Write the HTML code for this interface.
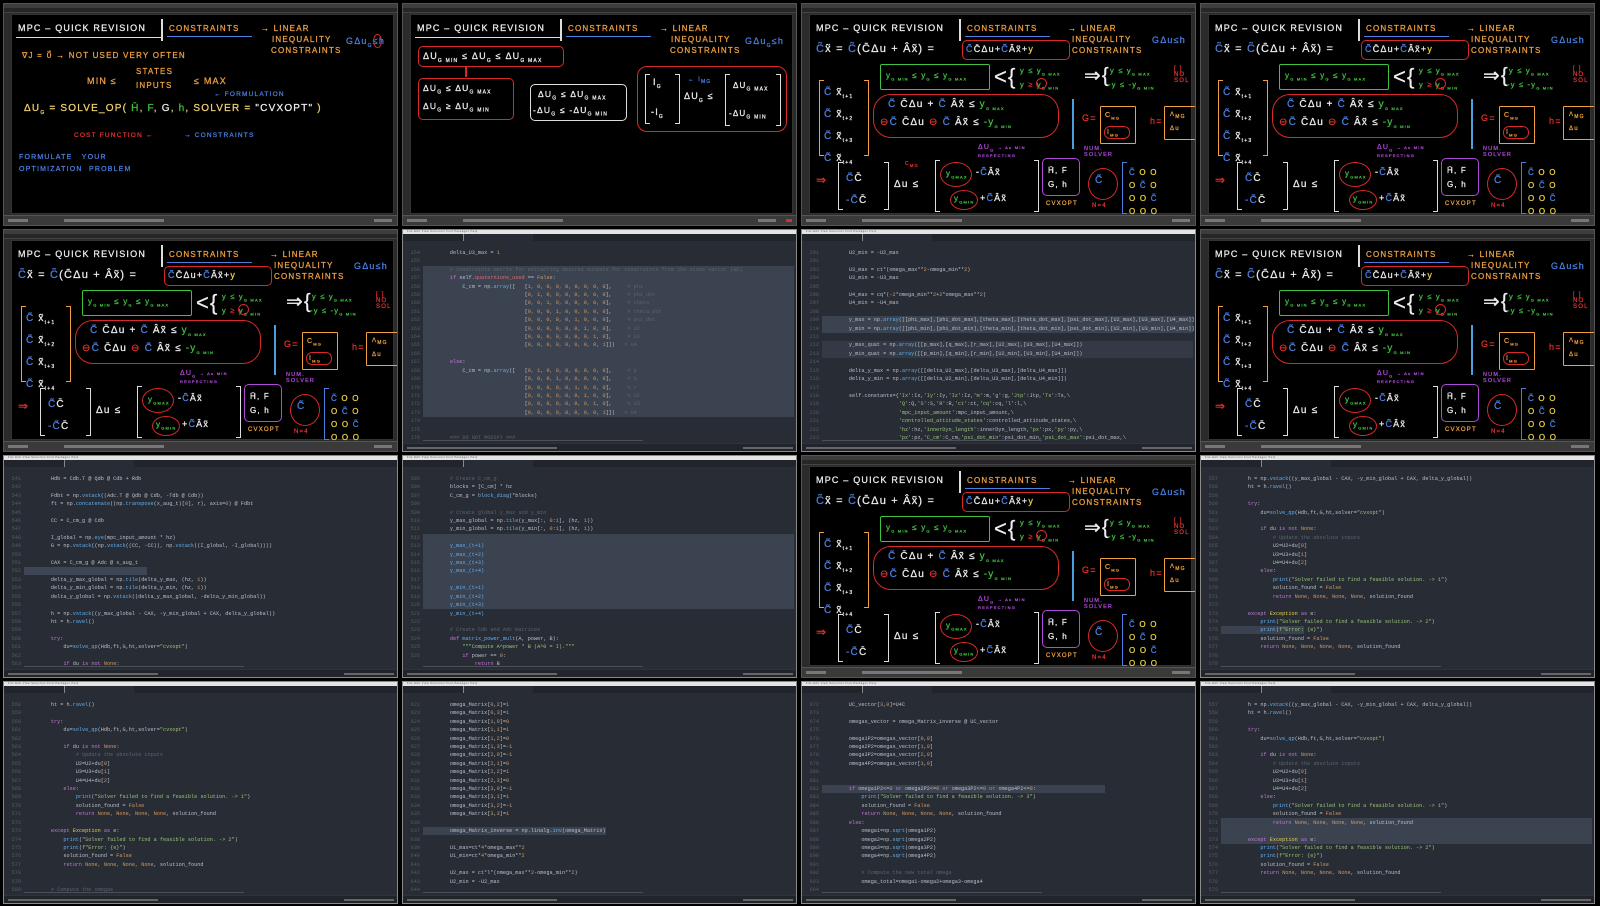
<!DOCTYPE html>
<html><head><meta charset="utf-8"><style>
*{margin:0;padding:0;box-sizing:border-box}
body{width:1600px;height:906px;background:#000;position:relative;overflow:hidden;font-family:"Liberation Sans",sans-serif}
.t{position:absolute;width:395px;height:223px;overflow:hidden}
.wb{background:#2b2b2b;border:1px solid #555}
.wb .mb{position:absolute;left:0;top:0;right:0;height:4px;background:#3d3d3d}
.wb .ru{position:absolute;left:0;top:4px;right:0;height:5px;background:#262626;border-bottom:1px solid #444}
.wb .cv{position:absolute;left:7px;top:10px;right:3px;bottom:11px;background:#000;border:1px solid #333}
.wb .sb{position:absolute;left:0;right:0;bottom:0;height:10px;background:#3a3a3a;border-top:1px solid #555}
.wb .sb i{position:absolute;top:3px;height:3px;background:#777}
.h{position:absolute;white-space:nowrap;letter-spacing:1.2px;font-size:8px;line-height:1;-webkit-text-stroke:0.25px currentColor}
.w{color:#eee}.o{color:#f0a040}.b{color:#4a7fe0}.r{color:#e53030}.g{color:#3fc23f}.p{color:#b04ad8}.y{color:#e8d040}
.bx{position:absolute;border:1.5px solid #d82828;border-radius:5px}
.code{background:#282c34;border:1px solid #8a8a8a}
.code .mb{position:absolute;left:0;top:0;right:0;height:4px;background:#e4e4e4;font-size:2.5px;color:#555;padding-left:4px;line-height:4px;letter-spacing:.5px}
.code .tb{position:absolute;left:0;top:4px;right:0;height:7px;background:#21252b}
.code .tb b{position:absolute;left:60px;top:0;width:70px;height:7px;background:#282c34;border-left:1px solid #888}
.code .sb{position:absolute;left:0;right:0;bottom:0;height:8px;background:#21252b;border-top:1px solid #333}
.code .sb i{position:absolute;top:3px;height:2px;background:#666}
.code .sc{position:absolute;left:20px;bottom:10px;width:220px;height:1px;background:#4a4f58}
pre{position:absolute;top:19px;font-family:"Liberation Mono",monospace;font-size:5.2px;line-height:8.4px;white-space:pre}
pre.n{left:4px;color:#555b66;text-align:right;width:13px}
pre.c{left:22px;color:#b9bfca}
.hl{position:absolute;left:20px;right:2px;background:#3b4250}
.k{color:#c678dd}.f{color:#61afef}.s{color:#98c379}.m{color:#d19a66}.cm{color:#5c6370}.e{color:#e06c75}
.vl{position:absolute;width:1.5px;background:#ddd}
.ul{position:absolute;height:1.2px;background:#4a7fe0}
.brk{position:absolute;border:1.5px solid #ddd;border-left-width:1.5px;border-right:none}
.brr{position:absolute;border:1.5px solid #ddd;border-left:none}
.el{position:absolute;border:1.5px solid #d82828;border-radius:50%}
</style></head><body>

<!-- r0c0 -->
<div class="t wb" style="left:3px;top:3px">
<div class="mb"></div><div class="ru"></div><div class="cv"></div>
<div class="h w" style="left:14px;top:20px;font-size:9px">MPC – QUICK REVISION</div>
<div class="ul" style="left:12px;top:33px;width:145px;background:#ddd"></div>
<div class="vl" style="left:157px;top:15px;height:22px"></div>
<div class="h o" style="left:165px;top:21px;font-size:8px">CONSTRAINTS</div>
<div class="ul" style="left:163px;top:32px;width:85px"></div>
<div class="h o" style="left:257px;top:21px">→ LINEAR</div>
<div class="h o" style="left:268px;top:32px">INEQUALITY</div>
<div class="h o" style="left:267px;top:43px">CONSTRAINTS</div>
<div class="h b" style="left:342px;top:33px;font-size:9px">GΔu<sub style="font-size:5px">G</sub>≤h</div>
<div class="el" style="left:369px;top:30px;width:9px;height:14px"></div>
<div class="h o" style="left:18px;top:48px">∇J = 0⃗ → NOT USED VERY OFTEN</div>
<div class="h o" style="left:83px;top:73px;font-size:9px">MIN ≤</div>
<div class="h o" style="left:132px;top:64px">STATES</div>
<div class="h o" style="left:132px;top:78px">INPUTS</div>
<div class="h o" style="left:190px;top:73px;font-size:9px">≤ MAX</div>
<div class="h b" style="left:210px;top:88px;font-size:6.5px">← FORMULATION</div>
<div class="h" style="left:20px;top:100px;font-size:10px;color:#f0d070">ΔU<sub style="font-size:5px">G</sub> = SOLVE_OP( <span class="g">H̄</span>, <span class="g">F</span>, <span class="w">G</span>, <span class="g">h</span>, SOLVER = <span class="w">"CVXOPT"</span> )</div>
<div class="h r" style="left:70px;top:129px;font-size:6.5px">COST FUNCTION ←</div>
<div class="h b" style="left:180px;top:129px;font-size:6.5px">→ CONSTRAINTS</div>
<div class="h b" style="left:15px;top:150px;font-size:7px">FORMULATE &nbsp; YOUR</div>
<div class="h b" style="left:15px;top:162px;font-size:7px">OPTIMIZATION &nbsp;PROBLEM</div>
<div class="sb"><i style="left:4px;width:20px"></i><i style="left:60px;width:100px"></i><i style="left:370px;width:18px"></i></div>
</div>

<!-- r0c1 -->
<div class="t wb" style="left:402px;top:3px">
<div class="mb"></div><div class="ru"></div><div class="cv"></div>
<div class="h w" style="left:14px;top:20px;font-size:9px">MPC – QUICK REVISION</div>
<div class="ul" style="left:12px;top:33px;width:145px;background:#ddd"></div>
<div class="vl" style="left:157px;top:15px;height:22px"></div>
<div class="h o" style="left:165px;top:21px">CONSTRAINTS</div>
<div class="ul" style="left:163px;top:32px;width:85px"></div>
<div class="h o" style="left:257px;top:21px">→ LINEAR</div>
<div class="h o" style="left:268px;top:32px">INEQUALITY</div>
<div class="h o" style="left:267px;top:43px">CONSTRAINTS</div>
<div class="h b" style="left:342px;top:33px;font-size:9px">GΔu<sub style="font-size:5px">G</sub>≤h</div>
<div class="bx" style="left:15px;top:42px;width:146px;height:21px"></div>
<div class="h w" style="left:20px;top:48px;font-size:9px">ΔU<sub style="font-size:5px">G MIN</sub> ≤ ΔU<sub style="font-size:5px">G</sub> ≤ ΔU<sub style="font-size:5px">G MAX</sub></div>
<div style="position:absolute;left:62px;top:63px;width:1.5px;height:10px;background:#d82828"></div>
<div class="bx" style="left:15px;top:74px;width:96px;height:42px"></div>
<div class="h w" style="left:20px;top:80px;font-size:8.5px">ΔU<sub style="font-size:5px">G</sub> ≤ ΔU<sub style="font-size:5px">G MAX</sub></div>
<div class="h w" style="left:20px;top:98px;font-size:8.5px">ΔU<sub style="font-size:5px">G</sub> ≥ ΔU<sub style="font-size:5px">G MIN</sub></div>
<div class="bx" style="left:127px;top:80px;width:97px;height:37px;border-color:#ddd"></div>
<div class="h w" style="left:135px;top:86px;font-size:8.5px">ΔU<sub style="font-size:5px">G</sub> ≤ ΔU<sub style="font-size:5px">G MAX</sub></div>
<div class="h w" style="left:130px;top:102px;font-size:8.5px">-ΔU<sub style="font-size:5px">G</sub> ≤ -ΔU<sub style="font-size:5px">G MIN</sub></div>
<div class="bx" style="left:234px;top:62px;width:150px;height:66px;border-radius:10px"></div>
<div class="brk" style="left:242px;top:70px;width:5px;height:50px"></div>
<div class="brr" style="left:272px;top:70px;width:5px;height:50px"></div>
<div class="h w" style="left:250px;top:74px;font-size:9px">I<sub style="font-size:5px">G</sub></div>
<div class="h w" style="left:248px;top:104px;font-size:9px">-I<sub style="font-size:5px">G</sub></div>
<div class="h w" style="left:281px;top:88px;font-size:9px">ΔU<sub style="font-size:5px">G</sub> ≤</div>
<div class="brk" style="left:322px;top:70px;width:5px;height:52px"></div>
<div class="brr" style="left:373px;top:70px;width:5px;height:52px"></div>
<div class="h w" style="left:330px;top:78px;font-size:8px">ΔU<sub style="font-size:5px">G MAX</sub></div>
<div class="h w" style="left:326px;top:106px;font-size:8px">-ΔU<sub style="font-size:5px">G MIN</sub></div>
<div class="h b" style="left:285px;top:73px;font-size:6px">← I<sub>MG</sub></div>
<div class="sb"><i style="left:4px;width:20px"></i><i style="left:60px;width:100px"></i><i style="left:355px;width:18px"></i><i style="left:383px;width:6px;background:#c33"></i></div>
</div>

<!-- complex boards -->
<div class="t wb" style="left:801px;top:3px">
<div class="mb"></div><div class="ru"></div><div class="cv"></div>
<div class="h w" style="left:14px;top:20px;font-size:9px">MPC – QUICK REVISION</div>
<div class="vl" style="left:157px;top:15px;height:22px"></div>
<div class="h o" style="left:165px;top:21px">CONSTRAINTS</div><div class="ul" style="left:163px;top:32px;width:85px"></div>
<div class="h o" style="left:266px;top:21px">→ LINEAR</div><div class="h o" style="left:270px;top:32px">INEQUALITY</div><div class="h o" style="left:270px;top:43px">CONSTRAINTS</div>
<div class="h b" style="left:350px;top:32px;font-size:9px">GΔu≤h</div>
<div class="h b" style="left:14px;top:40px;font-size:11px">C̃<span class="w">x̃</span> <span class="w">=</span> C̃<span class="w">(C̄Δu + Âx̃) =</span></div>
<div class="bx" style="left:160px;top:36px;width:108px;height:20px"></div>
<div class="h b" style="left:164px;top:41px;font-size:9px">C̃<span class="w">C̄Δu+</span>C̃<span class="w">Âx̃+</span><span class="y">y</span></div>
<div class="bx" style="left:78px;top:60px;width:110px;height:26px;border-color:#3fc23f;border-radius:2px"></div>
<div class="h g" style="left:84px;top:68px;font-size:8px">y<sub style="font-size:4px">G MIN</sub> ≤ y<sub style="font-size:4px">G</sub> ≤ y<sub style="font-size:4px">G MAX</sub></div>
<div class="h w" style="left:192px;top:62px;font-size:22px">&lt;{</div>
<div class="h g" style="left:218px;top:63px;font-size:7.5px">y ≤ y<sub style="font-size:4px">G MAX</sub></div>
<div class="h g" style="left:218px;top:77px;font-size:7.5px">y <span class="r">≥</span> y<sub style="font-size:4px">G MIN</sub></div>
<div class="el" style="left:234px;top:74px;width:11px;height:11px"></div>
<div class="h w" style="left:282px;top:62px;font-size:20px">⇒{</div>
<div class="h g" style="left:308px;top:63px;font-size:7.5px">y ≤ y<sub style="font-size:4px">G MAX</sub></div>
<div class="h g" style="left:306px;top:77px;font-size:7.5px">-y ≤ -y<sub style="font-size:4px">G MIN</sub></div>
<div class="h r" style="left:372px;top:62px;font-size:6px">[ ]<br>NO<br>SOL</div>
<div class="brk" style="left:17px;top:76px;width:5px;height:76px;border-color:#f0a040"></div>
<div class="brr" style="left:62px;top:76px;width:5px;height:76px;border-color:#f0a040"></div>
<div class="h b" style="left:22px;top:80px;font-size:10px;line-height:17px">C̃ <span class="w">x̃<sub style="font-size:5px">t+1</sub></span><br>C̃ <span class="w">x̃<sub style="font-size:5px">t+2</sub></span><br>C̃ <span class="w">x̃<sub style="font-size:5px">t+3</sub></span><br>C̃ <span class="w">x̃<sub style="font-size:5px">t+4</sub></span></div>
<div class="bx" style="left:71px;top:90px;width:186px;height:44px;border-radius:18px"></div>
<div class="h b" style="left:86px;top:96px;font-size:10px">C̃ <span class="w">C̄Δu +</span> C̃ <span class="w">Âx̃ ≤</span> <span class="g">y<sub style="font-size:4px">G MAX</sub></span></div>
<div class="h w" style="left:78px;top:114px;font-size:10px"><span class="r">⊖</span><span class="b">C̃</span> C̄Δu <span class="r">⊖</span> <span class="b">C̃</span> Âx̃ ≤ <span class="g">-y<sub style="font-size:4px">G MIN</sub></span></div>
<div style="position:absolute;left:270px;top:95px;width:1.5px;height:50px;background:#4a9fe0"></div>
<div class="h r" style="left:280px;top:110px;font-size:9px">G=</div>
<div class="bx" style="left:298px;top:102px;width:36px;height:38px;border-color:#f0a040;border-radius:1px"></div>
<div class="h o" style="left:303px;top:108px;font-size:7px">C<sub style="font-size:4px">MG</sub></div>
<div class="bx" style="left:302px;top:122px;width:26px;height:13px;border-radius:6px"></div>
<div class="h o" style="left:305px;top:125px;font-size:7px">I<sub style="font-size:4px">MG</sub></div>
<div class="h r" style="left:348px;top:113px;font-size:9px">h=</div>
<div class="bx" style="left:362px;top:102px;width:40px;height:34px;border-color:#f0a040;border-radius:1px"></div>
<div class="h o" style="left:368px;top:108px;font-size:6px">Λ<sub>MG</sub><br><br>Δu</div>
<div class="h p" style="left:176px;top:140px;font-size:7px">ΔU<sub style="font-size:4px">G</sub> <span style="font-size:4px">→ Δu MIN<br>RESPECTING</span></div>
<div class="h p" style="left:282px;top:143px;font-size:5.5px">NUM.<br>SOLVER</div>
<div class="h r" style="left:14px;top:170px;font-size:12px">⇒</div>
<div class="brk" style="left:36px;top:158px;width:5px;height:48px"></div>
<div class="brr" style="left:82px;top:158px;width:5px;height:48px"></div>
<div class="h b" style="left:44px;top:164px;font-size:10px;line-height:22px">C̃<span class="w">C̄</span><br>-C̃<span class="w">C̄</span></div>
<div class="h w" style="left:92px;top:176px;font-size:10px">Δu ≤</div>
<div class="h r" style="left:103px;top:158px;font-size:5px">C<sub>MG</sub></div>
<div class="brk" style="left:133px;top:156px;width:5px;height:52px"></div>
<div class="brr" style="left:232px;top:156px;width:5px;height:52px"></div>
<div class="el" style="left:138px;top:158px;width:32px;height:25px"></div>
<div class="h g" style="left:144px;top:166px;font-size:8px">y<sub style="font-size:4px">GMAX</sub></div>
<div class="h w" style="left:174px;top:164px;font-size:9px">-<span class="b">C̃</span>Âx̃</div>
<div class="el" style="left:148px;top:186px;width:28px;height:20px"></div>
<div class="h g" style="left:152px;top:191px;font-size:8px">y<sub style="font-size:4px">GMIN</sub></div>
<div class="h w" style="left:178px;top:190px;font-size:9px">+<span class="b">C̃</span>Âx̃</div>
<div class="bx" style="left:240px;top:154px;width:38px;height:38px;border-color:#b04ad8"></div>
<div class="h w" style="left:246px;top:160px;font-size:8px;line-height:14px">H̄, F<br>G, h</div>
<div class="h o" style="left:244px;top:197px;font-size:6px">CVXOPT</div>
<div class="el" style="left:286px;top:164px;width:30px;height:32px"></div>
<div class="h b" style="left:293px;top:172px;font-size:10px">C̃</div>
<div class="h r" style="left:290px;top:199px;font-size:6px">N=4</div>
<div class="brk" style="left:320px;top:158px;width:5px;height:52px;border-color:#4a7fe0"></div>
<div class="h y" style="left:327px;top:162px;font-size:8px;line-height:13px"><span class="b">C̃</span> O O<br>O <span class="b">C̃</span> O<br>O O <span class="b">C̃</span><br>O O O</div>
<div class="sb"><i style="left:4px;width:20px"></i><i style="left:60px;width:100px"></i><i style="left:370px;width:18px"></i></div>
</div>

<div class="t wb" style="left:1200px;top:3px">
<div class="mb"></div><div class="ru"></div><div class="cv"></div>
<div class="h w" style="left:14px;top:20px;font-size:9px">MPC – QUICK REVISION</div>
<div class="vl" style="left:157px;top:15px;height:22px"></div>
<div class="h o" style="left:165px;top:21px">CONSTRAINTS</div><div class="ul" style="left:163px;top:32px;width:85px"></div>
<div class="h o" style="left:266px;top:21px">→ LINEAR</div><div class="h o" style="left:270px;top:32px">INEQUALITY</div><div class="h o" style="left:270px;top:43px">CONSTRAINTS</div>
<div class="h b" style="left:350px;top:32px;font-size:9px">GΔu≤h</div>
<div class="h b" style="left:14px;top:40px;font-size:11px">C̃<span class="w">x̃</span> <span class="w">=</span> C̃<span class="w">(C̄Δu + Âx̃) =</span></div>
<div class="bx" style="left:160px;top:36px;width:108px;height:20px"></div>
<div class="h b" style="left:164px;top:41px;font-size:9px">C̃<span class="w">C̄Δu+</span>C̃<span class="w">Âx̃+</span><span class="y">y</span></div>
<div class="bx" style="left:78px;top:60px;width:110px;height:26px;border-color:#3fc23f;border-radius:2px"></div>
<div class="h g" style="left:84px;top:68px;font-size:8px">y<sub style="font-size:4px">G MIN</sub> ≤ y<sub style="font-size:4px">G</sub> ≤ y<sub style="font-size:4px">G MAX</sub></div>
<div class="h w" style="left:192px;top:62px;font-size:22px">&lt;{</div>
<div class="h g" style="left:218px;top:63px;font-size:7.5px">y ≤ y<sub style="font-size:4px">G MAX</sub></div>
<div class="h g" style="left:218px;top:77px;font-size:7.5px">y <span class="r">≥</span> y<sub style="font-size:4px">G MIN</sub></div>
<div class="el" style="left:234px;top:74px;width:11px;height:11px"></div>
<div class="h w" style="left:282px;top:62px;font-size:20px">⇒{</div>
<div class="h g" style="left:308px;top:63px;font-size:7.5px">y ≤ y<sub style="font-size:4px">G MAX</sub></div>
<div class="h g" style="left:306px;top:77px;font-size:7.5px">-y ≤ -y<sub style="font-size:4px">G MIN</sub></div>
<div class="h r" style="left:372px;top:62px;font-size:6px">[ ]<br>NO<br>SOL</div>
<div class="brk" style="left:17px;top:76px;width:5px;height:76px;border-color:#f0a040"></div>
<div class="brr" style="left:62px;top:76px;width:5px;height:76px;border-color:#f0a040"></div>
<div class="h b" style="left:22px;top:80px;font-size:10px;line-height:17px">C̃ <span class="w">x̃<sub style="font-size:5px">t+1</sub></span><br>C̃ <span class="w">x̃<sub style="font-size:5px">t+2</sub></span><br>C̃ <span class="w">x̃<sub style="font-size:5px">t+3</sub></span><br>C̃ <span class="w">x̃<sub style="font-size:5px">t+4</sub></span></div>
<div class="bx" style="left:71px;top:90px;width:186px;height:44px;border-radius:18px"></div>
<div class="h b" style="left:86px;top:96px;font-size:10px">C̃ <span class="w">C̄Δu +</span> C̃ <span class="w">Âx̃ ≤</span> <span class="g">y<sub style="font-size:4px">G MAX</sub></span></div>
<div class="h w" style="left:78px;top:114px;font-size:10px"><span class="r">⊖</span><span class="b">C̃</span> C̄Δu <span class="r">⊖</span> <span class="b">C̃</span> Âx̃ ≤ <span class="g">-y<sub style="font-size:4px">G MIN</sub></span></div>
<div style="position:absolute;left:270px;top:95px;width:1.5px;height:50px;background:#4a9fe0"></div>
<div class="h r" style="left:280px;top:110px;font-size:9px">G=</div>
<div class="bx" style="left:298px;top:102px;width:36px;height:38px;border-color:#f0a040;border-radius:1px"></div>
<div class="h o" style="left:303px;top:108px;font-size:7px">C<sub style="font-size:4px">MG</sub></div>
<div class="bx" style="left:302px;top:122px;width:26px;height:13px;border-radius:6px"></div>
<div class="h o" style="left:305px;top:125px;font-size:7px">I<sub style="font-size:4px">MG</sub></div>
<div class="h r" style="left:348px;top:113px;font-size:9px">h=</div>
<div class="bx" style="left:362px;top:102px;width:40px;height:34px;border-color:#f0a040;border-radius:1px"></div>
<div class="h o" style="left:368px;top:108px;font-size:6px">Λ<sub>MG</sub><br><br>Δu</div>
<div class="h p" style="left:176px;top:140px;font-size:7px">ΔU<sub style="font-size:4px">G</sub> <span style="font-size:4px">→ Δu MIN<br>RESPECTING</span></div>
<div class="h p" style="left:282px;top:143px;font-size:5.5px">NUM.<br>SOLVER</div>
<div class="h r" style="left:14px;top:170px;font-size:12px">⇒</div>
<div class="brk" style="left:36px;top:158px;width:5px;height:48px"></div>
<div class="brr" style="left:82px;top:158px;width:5px;height:48px"></div>
<div class="h b" style="left:44px;top:164px;font-size:10px;line-height:22px">C̃<span class="w">C̄</span><br>-C̃<span class="w">C̄</span></div>
<div class="h w" style="left:92px;top:176px;font-size:10px">Δu ≤</div>
<div class="brk" style="left:133px;top:156px;width:5px;height:52px"></div>
<div class="brr" style="left:232px;top:156px;width:5px;height:52px"></div>
<div class="el" style="left:138px;top:158px;width:32px;height:25px"></div>
<div class="h g" style="left:144px;top:166px;font-size:8px">y<sub style="font-size:4px">GMAX</sub></div>
<div class="h w" style="left:174px;top:164px;font-size:9px">-<span class="b">C̃</span>Âx̃</div>
<div class="el" style="left:148px;top:186px;width:28px;height:20px"></div>
<div class="h g" style="left:152px;top:191px;font-size:8px">y<sub style="font-size:4px">GMIN</sub></div>
<div class="h w" style="left:178px;top:190px;font-size:9px">+<span class="b">C̃</span>Âx̃</div>
<div class="bx" style="left:240px;top:154px;width:38px;height:38px;border-color:#b04ad8"></div>
<div class="h w" style="left:246px;top:160px;font-size:8px;line-height:14px">H̄, F<br>G, h</div>
<div class="h o" style="left:244px;top:197px;font-size:6px">CVXOPT</div>
<div class="el" style="left:286px;top:164px;width:30px;height:32px"></div>
<div class="h b" style="left:293px;top:172px;font-size:10px">C̃</div>
<div class="h r" style="left:290px;top:199px;font-size:6px">N=4</div>
<div class="brk" style="left:320px;top:158px;width:5px;height:52px;border-color:#4a7fe0"></div>
<div class="h y" style="left:327px;top:162px;font-size:8px;line-height:13px"><span class="b">C̃</span> O O<br>O <span class="b">C̃</span> O<br>O O <span class="b">C̃</span><br>O O O</div>
<div class="sb"><i style="left:4px;width:20px"></i><i style="left:60px;width:100px"></i><i style="left:370px;width:18px"></i></div>
</div>

<div class="t wb" style="left:3px;top:229px">
<div class="mb"></div><div class="ru"></div><div class="cv"></div>
<div class="h w" style="left:14px;top:20px;font-size:9px">MPC – QUICK REVISION</div>
<div class="vl" style="left:157px;top:15px;height:22px"></div>
<div class="h o" style="left:165px;top:21px">CONSTRAINTS</div><div class="ul" style="left:163px;top:32px;width:85px"></div>
<div class="h o" style="left:266px;top:21px">→ LINEAR</div><div class="h o" style="left:270px;top:32px">INEQUALITY</div><div class="h o" style="left:270px;top:43px">CONSTRAINTS</div>
<div class="h b" style="left:350px;top:32px;font-size:9px">GΔu≤h</div>
<div class="h b" style="left:14px;top:40px;font-size:11px">C̃<span class="w">x̃</span> <span class="w">=</span> C̃<span class="w">(C̄Δu + Âx̃) =</span></div>
<div class="bx" style="left:160px;top:36px;width:108px;height:20px"></div>
<div class="h b" style="left:164px;top:41px;font-size:9px">C̃<span class="w">C̄Δu+</span>C̃<span class="w">Âx̃+</span><span class="y">y</span></div>
<div class="bx" style="left:78px;top:60px;width:110px;height:26px;border-color:#3fc23f;border-radius:2px"></div>
<div class="h g" style="left:84px;top:68px;font-size:8px">y<sub style="font-size:4px">G MIN</sub> ≤ y<sub style="font-size:4px">G</sub> ≤ y<sub style="font-size:4px">G MAX</sub></div>
<div class="h w" style="left:192px;top:62px;font-size:22px">&lt;{</div>
<div class="h g" style="left:218px;top:63px;font-size:7.5px">y ≤ y<sub style="font-size:4px">G MAX</sub></div>
<div class="h g" style="left:218px;top:77px;font-size:7.5px">y <span class="r">≥</span> y<sub style="font-size:4px">G MIN</sub></div>
<div class="el" style="left:234px;top:74px;width:11px;height:11px"></div>
<div class="h w" style="left:282px;top:62px;font-size:20px">⇒{</div>
<div class="h g" style="left:308px;top:63px;font-size:7.5px">y ≤ y<sub style="font-size:4px">G MAX</sub></div>
<div class="h g" style="left:306px;top:77px;font-size:7.5px">-y ≤ -y<sub style="font-size:4px">G MIN</sub></div>
<div class="h r" style="left:372px;top:62px;font-size:6px">[ ]<br>NO<br>SOL</div>
<div class="brk" style="left:17px;top:76px;width:5px;height:76px;border-color:#f0a040"></div>
<div class="brr" style="left:62px;top:76px;width:5px;height:76px;border-color:#f0a040"></div>
<div class="h b" style="left:22px;top:80px;font-size:10px;line-height:17px">C̃ <span class="w">x̃<sub style="font-size:5px">t+1</sub></span><br>C̃ <span class="w">x̃<sub style="font-size:5px">t+2</sub></span><br>C̃ <span class="w">x̃<sub style="font-size:5px">t+3</sub></span><br>C̃ <span class="w">x̃<sub style="font-size:5px">t+4</sub></span></div>
<div class="bx" style="left:71px;top:90px;width:186px;height:44px;border-radius:18px"></div>
<div class="h b" style="left:86px;top:96px;font-size:10px">C̃ <span class="w">C̄Δu +</span> C̃ <span class="w">Âx̃ ≤</span> <span class="g">y<sub style="font-size:4px">G MAX</sub></span></div>
<div class="h w" style="left:78px;top:114px;font-size:10px"><span class="r">⊖</span><span class="b">C̃</span> C̄Δu <span class="r">⊖</span> <span class="b">C̃</span> Âx̃ ≤ <span class="g">-y<sub style="font-size:4px">G MIN</sub></span></div>
<div style="position:absolute;left:270px;top:95px;width:1.5px;height:50px;background:#4a9fe0"></div>
<div class="h r" style="left:280px;top:110px;font-size:9px">G=</div>
<div class="bx" style="left:298px;top:102px;width:36px;height:38px;border-color:#f0a040;border-radius:1px"></div>
<div class="h o" style="left:303px;top:108px;font-size:7px">C<sub style="font-size:4px">MG</sub></div>
<div class="bx" style="left:302px;top:122px;width:26px;height:13px;border-radius:6px"></div>
<div class="h o" style="left:305px;top:125px;font-size:7px">I<sub style="font-size:4px">MG</sub></div>
<div class="h r" style="left:348px;top:113px;font-size:9px">h=</div>
<div class="bx" style="left:362px;top:102px;width:40px;height:34px;border-color:#f0a040;border-radius:1px"></div>
<div class="h o" style="left:368px;top:108px;font-size:6px">Λ<sub>MG</sub><br><br>Δu</div>
<div class="h p" style="left:176px;top:140px;font-size:7px">ΔU<sub style="font-size:4px">G</sub> <span style="font-size:4px">→ Δu MIN<br>RESPECTING</span></div>
<div class="h p" style="left:282px;top:143px;font-size:5.5px">NUM.<br>SOLVER</div>
<div class="h r" style="left:14px;top:170px;font-size:12px">⇒</div>
<div class="brk" style="left:36px;top:158px;width:5px;height:48px"></div>
<div class="brr" style="left:82px;top:158px;width:5px;height:48px"></div>
<div class="h b" style="left:44px;top:164px;font-size:10px;line-height:22px">C̃<span class="w">C̄</span><br>-C̃<span class="w">C̄</span></div>
<div class="h w" style="left:92px;top:176px;font-size:10px">Δu ≤</div>
<div class="brk" style="left:133px;top:156px;width:5px;height:52px"></div>
<div class="brr" style="left:232px;top:156px;width:5px;height:52px"></div>
<div class="el" style="left:138px;top:158px;width:32px;height:25px"></div>
<div class="h g" style="left:144px;top:166px;font-size:8px">y<sub style="font-size:4px">GMAX</sub></div>
<div class="h w" style="left:174px;top:164px;font-size:9px">-<span class="b">C̃</span>Âx̃</div>
<div class="el" style="left:148px;top:186px;width:28px;height:20px"></div>
<div class="h g" style="left:152px;top:191px;font-size:8px">y<sub style="font-size:4px">GMIN</sub></div>
<div class="h w" style="left:178px;top:190px;font-size:9px">+<span class="b">C̃</span>Âx̃</div>
<div class="bx" style="left:240px;top:154px;width:38px;height:38px;border-color:#b04ad8"></div>
<div class="h w" style="left:246px;top:160px;font-size:8px;line-height:14px">H̄, F<br>G, h</div>
<div class="h o" style="left:244px;top:197px;font-size:6px">CVXOPT</div>
<div class="el" style="left:286px;top:164px;width:30px;height:32px"></div>
<div class="h b" style="left:293px;top:172px;font-size:10px">C̃</div>
<div class="h r" style="left:290px;top:199px;font-size:6px">N=4</div>
<div class="brk" style="left:320px;top:158px;width:5px;height:52px;border-color:#4a7fe0"></div>
<div class="h y" style="left:327px;top:162px;font-size:8px;line-height:13px"><span class="b">C̃</span> O O<br>O <span class="b">C̃</span> O<br>O O <span class="b">C̃</span><br>O O O</div>
<div class="sb"><i style="left:4px;width:20px"></i><i style="left:60px;width:100px"></i><i style="left:370px;width:18px"></i></div>
</div>

<div class="t wb" style="left:1200px;top:229px">
<div class="mb"></div><div class="ru"></div><div class="cv"></div>
<div class="h w" style="left:14px;top:20px;font-size:9px">MPC – QUICK REVISION</div>
<div class="vl" style="left:157px;top:15px;height:22px"></div>
<div class="h o" style="left:165px;top:21px">CONSTRAINTS</div><div class="ul" style="left:163px;top:32px;width:85px"></div>
<div class="h o" style="left:266px;top:21px">→ LINEAR</div><div class="h o" style="left:270px;top:32px">INEQUALITY</div><div class="h o" style="left:270px;top:43px">CONSTRAINTS</div>
<div class="h b" style="left:350px;top:32px;font-size:9px">GΔu≤h</div>
<div class="h b" style="left:14px;top:40px;font-size:11px">C̃<span class="w">x̃</span> <span class="w">=</span> C̃<span class="w">(C̄Δu + Âx̃) =</span></div>
<div class="bx" style="left:160px;top:36px;width:108px;height:20px"></div>
<div class="h b" style="left:164px;top:41px;font-size:9px">C̃<span class="w">C̄Δu+</span>C̃<span class="w">Âx̃+</span><span class="y">y</span></div>
<div class="bx" style="left:78px;top:60px;width:110px;height:26px;border-color:#3fc23f;border-radius:2px"></div>
<div class="h g" style="left:84px;top:68px;font-size:8px">y<sub style="font-size:4px">G MIN</sub> ≤ y<sub style="font-size:4px">G</sub> ≤ y<sub style="font-size:4px">G MAX</sub></div>
<div class="h w" style="left:192px;top:62px;font-size:22px">&lt;{</div>
<div class="h g" style="left:218px;top:63px;font-size:7.5px">y ≤ y<sub style="font-size:4px">G MAX</sub></div>
<div class="h g" style="left:218px;top:77px;font-size:7.5px">y <span class="r">≥</span> y<sub style="font-size:4px">G MIN</sub></div>
<div class="el" style="left:234px;top:74px;width:11px;height:11px"></div>
<div class="h w" style="left:282px;top:62px;font-size:20px">⇒{</div>
<div class="h g" style="left:308px;top:63px;font-size:7.5px">y ≤ y<sub style="font-size:4px">G MAX</sub></div>
<div class="h g" style="left:306px;top:77px;font-size:7.5px">-y ≤ -y<sub style="font-size:4px">G MIN</sub></div>
<div class="h r" style="left:372px;top:62px;font-size:6px">[ ]<br>NO<br>SOL</div>
<div class="brk" style="left:17px;top:76px;width:5px;height:76px;border-color:#f0a040"></div>
<div class="brr" style="left:62px;top:76px;width:5px;height:76px;border-color:#f0a040"></div>
<div class="h b" style="left:22px;top:80px;font-size:10px;line-height:17px">C̃ <span class="w">x̃<sub style="font-size:5px">t+1</sub></span><br>C̃ <span class="w">x̃<sub style="font-size:5px">t+2</sub></span><br>C̃ <span class="w">x̃<sub style="font-size:5px">t+3</sub></span><br>C̃ <span class="w">x̃<sub style="font-size:5px">t+4</sub></span></div>
<div class="bx" style="left:71px;top:90px;width:186px;height:44px;border-radius:18px"></div>
<div class="h b" style="left:86px;top:96px;font-size:10px">C̃ <span class="w">C̄Δu +</span> C̃ <span class="w">Âx̃ ≤</span> <span class="g">y<sub style="font-size:4px">G MAX</sub></span></div>
<div class="h w" style="left:78px;top:114px;font-size:10px"><span class="r">⊖</span><span class="b">C̃</span> C̄Δu <span class="r">⊖</span> <span class="b">C̃</span> Âx̃ ≤ <span class="g">-y<sub style="font-size:4px">G MIN</sub></span></div>
<div style="position:absolute;left:270px;top:95px;width:1.5px;height:50px;background:#4a9fe0"></div>
<div class="h r" style="left:280px;top:110px;font-size:9px">G=</div>
<div class="bx" style="left:298px;top:102px;width:36px;height:38px;border-color:#f0a040;border-radius:1px"></div>
<div class="h o" style="left:303px;top:108px;font-size:7px">C<sub style="font-size:4px">MG</sub></div>
<div class="bx" style="left:302px;top:122px;width:26px;height:13px;border-radius:6px"></div>
<div class="h o" style="left:305px;top:125px;font-size:7px">I<sub style="font-size:4px">MG</sub></div>
<div class="h r" style="left:348px;top:113px;font-size:9px">h=</div>
<div class="bx" style="left:362px;top:102px;width:40px;height:34px;border-color:#f0a040;border-radius:1px"></div>
<div class="h o" style="left:368px;top:108px;font-size:6px">Λ<sub>MG</sub><br><br>Δu</div>
<div class="h p" style="left:176px;top:140px;font-size:7px">ΔU<sub style="font-size:4px">G</sub> <span style="font-size:4px">→ Δu MIN<br>RESPECTING</span></div>
<div class="h p" style="left:282px;top:143px;font-size:5.5px">NUM.<br>SOLVER</div>
<div class="h r" style="left:14px;top:170px;font-size:12px">⇒</div>
<div class="brk" style="left:36px;top:158px;width:5px;height:48px"></div>
<div class="brr" style="left:82px;top:158px;width:5px;height:48px"></div>
<div class="h b" style="left:44px;top:164px;font-size:10px;line-height:22px">C̃<span class="w">C̄</span><br>-C̃<span class="w">C̄</span></div>
<div class="h w" style="left:92px;top:176px;font-size:10px">Δu ≤</div>
<div class="brk" style="left:133px;top:156px;width:5px;height:52px"></div>
<div class="brr" style="left:232px;top:156px;width:5px;height:52px"></div>
<div class="el" style="left:138px;top:158px;width:32px;height:25px"></div>
<div class="h g" style="left:144px;top:166px;font-size:8px">y<sub style="font-size:4px">GMAX</sub></div>
<div class="h w" style="left:174px;top:164px;font-size:9px">-<span class="b">C̃</span>Âx̃</div>
<div class="el" style="left:148px;top:186px;width:28px;height:20px"></div>
<div class="h g" style="left:152px;top:191px;font-size:8px">y<sub style="font-size:4px">GMIN</sub></div>
<div class="h w" style="left:178px;top:190px;font-size:9px">+<span class="b">C̃</span>Âx̃</div>
<div class="bx" style="left:240px;top:154px;width:38px;height:38px;border-color:#b04ad8"></div>
<div class="h w" style="left:246px;top:160px;font-size:8px;line-height:14px">H̄, F<br>G, h</div>
<div class="h o" style="left:244px;top:197px;font-size:6px">CVXOPT</div>
<div class="el" style="left:286px;top:164px;width:30px;height:32px"></div>
<div class="h b" style="left:293px;top:172px;font-size:10px">C̃</div>
<div class="h r" style="left:290px;top:199px;font-size:6px">N=4</div>
<div class="brk" style="left:320px;top:158px;width:5px;height:52px;border-color:#4a7fe0"></div>
<div class="h y" style="left:327px;top:162px;font-size:8px;line-height:13px"><span class="b">C̃</span> O O<br>O <span class="b">C̃</span> O<br>O O <span class="b">C̃</span><br>O O O</div>
<div class="sb"><i style="left:4px;width:20px"></i><i style="left:60px;width:100px"></i><i style="left:370px;width:18px"></i></div>
</div>

<div class="t wb" style="left:801px;top:455px">
<div class="mb"></div><div class="ru"></div><div class="cv"></div>
<div class="h w" style="left:14px;top:20px;font-size:9px">MPC – QUICK REVISION</div>
<div class="vl" style="left:157px;top:15px;height:22px"></div>
<div class="h o" style="left:165px;top:21px">CONSTRAINTS</div><div class="ul" style="left:163px;top:32px;width:85px"></div>
<div class="h o" style="left:266px;top:21px">→ LINEAR</div><div class="h o" style="left:270px;top:32px">INEQUALITY</div><div class="h o" style="left:270px;top:43px">CONSTRAINTS</div>
<div class="h b" style="left:350px;top:32px;font-size:9px">GΔu≤h</div>
<div class="h b" style="left:14px;top:40px;font-size:11px">C̃<span class="w">x̃</span> <span class="w">=</span> C̃<span class="w">(C̄Δu + Âx̃) =</span></div>
<div class="bx" style="left:160px;top:36px;width:108px;height:20px"></div>
<div class="h b" style="left:164px;top:41px;font-size:9px">C̃<span class="w">C̄Δu+</span>C̃<span class="w">Âx̃+</span><span class="y">y</span></div>
<div class="bx" style="left:78px;top:60px;width:110px;height:26px;border-color:#3fc23f;border-radius:2px"></div>
<div class="h g" style="left:84px;top:68px;font-size:8px">y<sub style="font-size:4px">G MIN</sub> ≤ y<sub style="font-size:4px">G</sub> ≤ y<sub style="font-size:4px">G MAX</sub></div>
<div class="h w" style="left:192px;top:62px;font-size:22px">&lt;{</div>
<div class="h g" style="left:218px;top:63px;font-size:7.5px">y ≤ y<sub style="font-size:4px">G MAX</sub></div>
<div class="h g" style="left:218px;top:77px;font-size:7.5px">y <span class="r">≥</span> y<sub style="font-size:4px">G MIN</sub></div>
<div class="el" style="left:234px;top:74px;width:11px;height:11px"></div>
<div class="h w" style="left:282px;top:62px;font-size:20px">⇒{</div>
<div class="h g" style="left:308px;top:63px;font-size:7.5px">y ≤ y<sub style="font-size:4px">G MAX</sub></div>
<div class="h g" style="left:306px;top:77px;font-size:7.5px">-y ≤ -y<sub style="font-size:4px">G MIN</sub></div>
<div class="h r" style="left:372px;top:62px;font-size:6px">[ ]<br>NO<br>SOL</div>
<div class="brk" style="left:17px;top:76px;width:5px;height:76px;border-color:#f0a040"></div>
<div class="brr" style="left:62px;top:76px;width:5px;height:76px;border-color:#f0a040"></div>
<div class="h b" style="left:22px;top:80px;font-size:10px;line-height:17px">C̃ <span class="w">x̃<sub style="font-size:5px">t+1</sub></span><br>C̃ <span class="w">x̃<sub style="font-size:5px">t+2</sub></span><br>C̃ <span class="w">x̃<sub style="font-size:5px">t+3</sub></span><br>C̃ <span class="w">x̃<sub style="font-size:5px">t+4</sub></span></div>
<div class="bx" style="left:71px;top:90px;width:186px;height:44px;border-radius:18px"></div>
<div class="h b" style="left:86px;top:96px;font-size:10px">C̃ <span class="w">C̄Δu +</span> C̃ <span class="w">Âx̃ ≤</span> <span class="g">y<sub style="font-size:4px">G MAX</sub></span></div>
<div class="h w" style="left:78px;top:114px;font-size:10px"><span class="r">⊖</span><span class="b">C̃</span> C̄Δu <span class="r">⊖</span> <span class="b">C̃</span> Âx̃ ≤ <span class="g">-y<sub style="font-size:4px">G MIN</sub></span></div>
<div style="position:absolute;left:270px;top:95px;width:1.5px;height:50px;background:#4a9fe0"></div>
<div class="h r" style="left:280px;top:110px;font-size:9px">G=</div>
<div class="bx" style="left:298px;top:102px;width:36px;height:38px;border-color:#f0a040;border-radius:1px"></div>
<div class="h o" style="left:303px;top:108px;font-size:7px">C<sub style="font-size:4px">MG</sub></div>
<div class="bx" style="left:302px;top:122px;width:26px;height:13px;border-radius:6px"></div>
<div class="h o" style="left:305px;top:125px;font-size:7px">I<sub style="font-size:4px">MG</sub></div>
<div class="h r" style="left:348px;top:113px;font-size:9px">h=</div>
<div class="bx" style="left:362px;top:102px;width:40px;height:34px;border-color:#f0a040;border-radius:1px"></div>
<div class="h o" style="left:368px;top:108px;font-size:6px">Λ<sub>MG</sub><br><br>Δu</div>
<div class="h p" style="left:176px;top:140px;font-size:7px">ΔU<sub style="font-size:4px">G</sub> <span style="font-size:4px">→ Δu MIN<br>RESPECTING</span></div>
<div class="h p" style="left:282px;top:143px;font-size:5.5px">NUM.<br>SOLVER</div>
<div class="h r" style="left:14px;top:170px;font-size:12px">⇒</div>
<div class="brk" style="left:36px;top:158px;width:5px;height:48px"></div>
<div class="brr" style="left:82px;top:158px;width:5px;height:48px"></div>
<div class="h b" style="left:44px;top:164px;font-size:10px;line-height:22px">C̃<span class="w">C̄</span><br>-C̃<span class="w">C̄</span></div>
<div class="h w" style="left:92px;top:176px;font-size:10px">Δu ≤</div>
<div class="brk" style="left:133px;top:156px;width:5px;height:52px"></div>
<div class="brr" style="left:232px;top:156px;width:5px;height:52px"></div>
<div class="el" style="left:138px;top:158px;width:32px;height:25px"></div>
<div class="h g" style="left:144px;top:166px;font-size:8px">y<sub style="font-size:4px">GMAX</sub></div>
<div class="h w" style="left:174px;top:164px;font-size:9px">-<span class="b">C̃</span>Âx̃</div>
<div class="el" style="left:148px;top:186px;width:28px;height:20px"></div>
<div class="h g" style="left:152px;top:191px;font-size:8px">y<sub style="font-size:4px">GMIN</sub></div>
<div class="h w" style="left:178px;top:190px;font-size:9px">+<span class="b">C̃</span>Âx̃</div>
<div class="bx" style="left:240px;top:154px;width:38px;height:38px;border-color:#b04ad8"></div>
<div class="h w" style="left:246px;top:160px;font-size:8px;line-height:14px">H̄, F<br>G, h</div>
<div class="h o" style="left:244px;top:197px;font-size:6px">CVXOPT</div>
<div class="el" style="left:286px;top:164px;width:30px;height:32px"></div>
<div class="h b" style="left:293px;top:172px;font-size:10px">C̃</div>
<div class="h r" style="left:290px;top:199px;font-size:6px">N=4</div>
<div class="brk" style="left:320px;top:158px;width:5px;height:52px;border-color:#4a7fe0"></div>
<div class="h y" style="left:327px;top:162px;font-size:8px;line-height:13px"><span class="b">C̃</span> O O<br>O <span class="b">C̃</span> O<br>O O <span class="b">C̃</span><br>O O O</div>
<div class="sb"><i style="left:4px;width:20px"></i><i style="left:60px;width:100px"></i><i style="left:370px;width:18px"></i></div>
</div>

<!-- code r1c1 -->
<div class="t code" style="left:402px;top:229px">
<div class="mb">File Edit View Selection Find Packages Help</div><div class="tb"><b></b></div>
<div class="hl" style="top:36px;height:151px"></div>
<pre class="n">154
155
156
157
158
159
160
161
162
163
164
165
166
167
168
169
170
171
172
173
174
175
176</pre>
<pre class="c">        delta_U3_max = <span class="m">1</span>

        <span class="cm"># Constraints matrix for extracting desired outputs for constraints from the state vector (GD)</span>
        <span class="k">if</span> self.<span class="e">quaternions_used</span> == <span class="m">False</span>:
            C_cm = np.<span class="f">array</span>([   [<span class="m">1, 0, 0, 0, 0, 0, 0, 0, 0</span>],     <span class="cm"># phi</span>
                                [<span class="m">0, 1, 0, 0, 0, 0, 0, 0, 0</span>],     <span class="cm"># phi_dot</span>
                                [<span class="m">0, 0, 1, 0, 0, 0, 0, 0, 0</span>],     <span class="cm"># theta</span>
                                [<span class="m">0, 0, 0, 1, 0, 0, 0, 0, 0</span>],     <span class="cm"># theta_dot</span>
                                [<span class="m">0, 0, 0, 0, 0, 1, 0, 0, 0</span>],     <span class="cm"># psi_dot</span>
                                [<span class="m">0, 0, 0, 0, 0, 0, 1, 0, 0</span>],     <span class="cm"># U2</span>
                                [<span class="m">0, 0, 0, 0, 0, 0, 0, 1, 0</span>],     <span class="cm"># U3</span>
                                [<span class="m">0, 0, 0, 0, 0, 0, 0, 0, 1</span>]])   <span class="cm"># U4</span>

        <span class="k">else</span>:
            C_cm = np.<span class="f">array</span>([   [<span class="m">0, 1, 0, 0, 0, 0, 0, 0, 0</span>],     <span class="cm"># p</span>
                                [<span class="m">0, 0, 0, 1, 0, 0, 0, 0, 0</span>],     <span class="cm"># q</span>
                                [<span class="m">0, 0, 0, 0, 0, 1, 0, 0, 0</span>],     <span class="cm"># r</span>
                                [<span class="m">0, 0, 0, 0, 0, 0, 1, 0, 0</span>],     <span class="cm"># U2</span>
                                [<span class="m">0, 0, 0, 0, 0, 0, 0, 1, 0</span>],     <span class="cm"># U3</span>
                                [<span class="m">0, 0, 0, 0, 0, 0, 0, 0, 1</span>]])   <span class="cm"># U4</span>


        <span class="cm">### DO NOT MODIFY ###</span></pre>
<div class="sc"></div><div class="sb"><i style="left:4px;width:150px"></i><i style="left:340px;width:50px"></i></div>
</div>

<!-- code r1c2 -->
<div class="t code" style="left:801px;top:229px">
<div class="mb">File Edit View Selection Find Packages Help</div><div class="tb"><b></b></div>
<div class="hl" style="top:86px;height:17px"></div>
<div class="hl" style="top:111px;height:17px;background:#333a45"></div>
<pre class="n">201
202
203
204
205
206
207
208
209
210
211
212
213
214
215
216
217
218
219
220
221
222
223</pre>
<pre class="c">        U2_min = -U2_max

        U3_max = ct*(omega_max**<span class="m">2</span>-omega_min**<span class="m">2</span>)
        U3_min = -U3_max

        U4_max = cq*(-<span class="m">2</span>*omega_min**<span class="m">2</span>+<span class="m">2</span>*omega_max**<span class="m">2</span>)
        U4_min = -U4_max

        y_max = np.<span class="f">array</span>([[phi_max],[phi_dot_max],[theta_max],[theta_dot_max],[psi_dot_max],[U2_max],[U3_max],[U4_max]])
        y_min = np.<span class="f">array</span>([[phi_min],[phi_dot_min],[theta_min],[theta_dot_min],[psi_dot_min],[U2_min],[U3_min],[U4_min]])

        y_max_quat = np.<span class="f">array</span>([[p_max],[q_max],[r_max],[U2_max],[U3_max],[U4_max]])
        y_min_quat = np.<span class="f">array</span>([[p_min],[q_min],[r_min],[U2_min],[U3_min],[U4_min]])

        delta_y_max = np.<span class="f">array</span>([[delta_U2_max],[delta_U3_max],[delta_U4_max]])
        delta_y_min = np.<span class="f">array</span>([[delta_U2_min],[delta_U3_min],[delta_U4_min]])

        self.constants={<span class="s">'Ix'</span>:Ix,<span class="s">'Iy'</span>:Iy,<span class="s">'Iz'</span>:Iz,<span class="s">'m'</span>:m,<span class="s">'g'</span>:g,<span class="s">'Jtp'</span>:Jtp,<span class="s">'Ts'</span>:Ts,\
                        <span class="s">'Q'</span>:Q,<span class="s">'S'</span>:S,<span class="s">'R'</span>:R,<span class="s">'ct'</span>:ct,<span class="s">'cq'</span>:cq,<span class="s">'l'</span>:l,\
                        <span class="s">'mpc_input_amount'</span>:mpc_input_amount,\
                        <span class="s">'controlled_attitude_states'</span>:controlled_attitude_states,\
                        <span class="s">'hz'</span>:hz,<span class="s">'innerDyn_length'</span>:innerDyn_length,<span class="s">'px'</span>:px,<span class="s">'py'</span>:py,\
                        <span class="s">'pz'</span>:pz,<span class="s">'C_cm'</span>:C_cm,<span class="s">'psi_dot_min'</span>:psi_dot_min,<span class="s">'psi_dot_max'</span>:psi_dot_max,\
                        <span class="s">'Phi_ref_max'</span>:Phi_ref_max,<span class="s">'Theta_ref_max'</span>:Theta_ref_max,\</pre>
<div class="sc"></div><div class="sb"><i style="left:4px;width:150px"></i><i style="left:340px;width:50px"></i></div>
</div>

<!-- code r2c0 -->
<div class="t code" style="left:3px;top:455px">
<div class="mb">File Edit View Selection Find Packages Help</div><div class="tb"><b></b></div>
<div class="hl" style="top:111px;height:8px;right:250px;background:#3e4656"></div>
<pre class="n">541
542
543
544
545
546
547
548
549
550
551
552
553
554
555
556
557
558
559
560
561
562
563
564</pre>
<pre class="c">        Hdb = Cdb.T @ Qdb @ Cdb + Rdb

        Fdbt = np.<span class="f">vstack</span>((Adc.T @ Qdb @ Cdb, -Tdb @ Cdb))
        ft = np.<span class="f">concatenate</span>((np.<span class="f">transpose</span>(x_aug_t)[<span class="m">0</span>], r), axis=<span class="m">0</span>) @ Fdbt

        CC = C_cm_g @ Cdb

        I_global = np.<span class="f">eye</span>(mpc_input_amount * hz)
        G = np.<span class="f">vstack</span>((np.<span class="f">vstack</span>((CC, -CC)), np.<span class="f">vstack</span>((I_global, -I_global))))

        CAX = C_cm_g @ Adc @ x_aug_t

        delta_y_max_global = np.<span class="f">tile</span>(delta_y_max, (hz, <span class="m">1</span>))
        delta_y_min_global = np.<span class="f">tile</span>(delta_y_min, (hz, <span class="m">1</span>))
        delta_y_global = np.<span class="f">vstack</span>((delta_y_max_global, -delta_y_min_global))

        h = np.<span class="f">vstack</span>((y_max_global - CAX, -y_min_global + CAX, delta_y_global))
        ht = h.<span class="f">ravel</span>()

        <span class="k">try</span>:
            du=<span class="f">solve_qp</span>(Hdb,ft,G,ht,solver=<span class="s">"cvxopt"</span>)

            <span class="k">if</span> du <span class="k">is not</span> <span class="m">None</span>:
                <span class="cm"># Update the absolute inputs</span></pre>
<div class="sc"></div><div class="sb"><i style="left:4px;width:150px"></i><i style="left:340px;width:50px"></i></div>
</div>

<!-- code r2c1 -->
<div class="t code" style="left:402px;top:455px">
<div class="mb">File Edit View Selection Find Packages Help</div><div class="tb"><b></b></div>
<div class="hl" style="top:78px;height:75px"></div>
<pre class="n">505
506
507
508
509
510
511
512
513
514
515
516
517
518
519
520
521
522
523
524
525
526</pre>
<pre class="c">        <span class="cm"># Create C_cm_g</span>
        blocks = [C_cm] * hz
        C_cm_g = <span class="f">block_diag</span>(*blocks)

        <span class="cm"># Create global y_max and y_min</span>
        y_max_global = np.<span class="f">tile</span>(y_max[:, <span class="m">0</span>:<span class="m">1</span>], (hz, <span class="m">1</span>))
        y_min_global = np.<span class="f">tile</span>(y_min[:, <span class="m">0</span>:<span class="m">1</span>], (hz, <span class="m">1</span>))

        <span class="f">y_max_(t+1)</span>
        <span class="f">y_max_(t+2)</span>
        <span class="f">y_max_(t+3)</span>
        <span class="f">y_max_(t+4)</span>

        <span class="f">y_min_(t+1)</span>
        <span class="f">y_min_(t+2)</span>
        <span class="f">y_min_(t+3)</span>
        <span class="f">y_min_(t+4)</span>

        <span class="cm"># Create Cdb and Adc matrices</span>
        <span class="k">def</span> <span class="f">matrix_power_mult</span>(A, power, B):
            <span class="s">"""Compute A^power * B (A^0 = I)."""</span>
            <span class="k">if</span> power == <span class="m">0</span>:
                <span class="k">return</span> B</pre>
<div class="sc"></div><div class="sb"><i style="left:4px;width:150px"></i><i style="left:340px;width:50px"></i></div>
</div>

<!-- code r2c3 -->
<div class="t code" style="left:1200px;top:455px">
<div class="mb">File Edit View Selection Find Packages Help</div><div class="tb"><b></b></div>
<div class="hl" style="top:170px;height:8px;right:290px"></div>
<pre class="n">557
558
559
560
561
562
563
564
565
566
567
568
569
570
571
572
573
574
575
576
577
578
579
580</pre>
<pre class="c">        h = np.<span class="f">vstack</span>((y_max_global - CAX, -y_min_global + CAX, delta_y_global))
        ht = h.<span class="f">ravel</span>()

        <span class="k">try</span>:
            du=<span class="f">solve_qp</span>(Hdb,ft,G,ht,solver=<span class="s">"cvxopt"</span>)

            <span class="k">if</span> du <span class="k">is not</span> <span class="m">None</span>:
                <span class="cm"># Update the absolute inputs</span>
                U2=U2+du[<span class="m">0</span>]
                U3=U3+du[<span class="m">1</span>]
                U4=U4+du[<span class="m">2</span>]
            <span class="k">else</span>:
                <span class="f">print</span>(<span class="s">"Solver failed to find a feasible solution. -> 1"</span>)
                solution_found = <span class="m">False</span>
                <span class="k">return</span> <span class="m">None, None, None, None</span>, solution_found

        <span class="k">except</span> <span class="y">Exception</span> <span class="k">as</span> e:
            <span class="f">print</span>(<span class="s">"Solver failed to find a feasible solution. -> 2"</span>)
            <span class="f">print</span>(<span class="s">f"Error: {e}"</span>)
            solution_found = <span class="m">False</span>
            <span class="k">return</span> <span class="m">None, None, None, None</span>, solution_found

</pre>
<div class="sc"></div><div class="sb"><i style="left:4px;width:150px"></i><i style="left:340px;width:50px"></i></div>
</div>

<!-- code r3c0 -->
<div class="t code" style="left:3px;top:681px">
<div class="mb">File Edit View Selection Find Packages Help</div><div class="tb"><b></b></div>
<pre class="n">558
559
560
561
562
563
564
565
566
567
568
569
570
571
572
573
574
575
576
577
578
579
580
581</pre>
<pre class="c">        ht = h.<span class="f">ravel</span>()

        <span class="k">try</span>:
            du=<span class="f">solve_qp</span>(Hdb,ft,G,ht,solver=<span class="s">"cvxopt"</span>)

            <span class="k">if</span> du <span class="k">is not</span> <span class="m">None</span>:
                <span class="cm"># Update the absolute inputs</span>
                U2=U2+du[<span class="m">0</span>]
                U3=U3+du[<span class="m">1</span>]
                U4=U4+du[<span class="m">2</span>]
            <span class="k">else</span>:
                <span class="f">print</span>(<span class="s">"Solver failed to find a feasible solution. -> 1"</span>)
                solution_found = <span class="m">False</span>
                <span class="k">return</span> <span class="m">None, None, None, None</span>, solution_found

        <span class="k">except</span> <span class="y">Exception</span> <span class="k">as</span> e:
            <span class="f">print</span>(<span class="s">"Solver failed to find a feasible solution. -> 2"</span>)
            <span class="f">print</span>(<span class="s">f"Error: {e}"</span>)
            solution_found = <span class="m">False</span>
            <span class="k">return</span> <span class="m">None, None, None, None</span>, solution_found


        <span class="cm"># Compute the omegas</span>
</pre>
<div class="sc"></div><div class="sb"><i style="left:4px;width:150px"></i><i style="left:340px;width:50px"></i></div>
</div>

<!-- code r3c1 -->
<div class="t code" style="left:402px;top:681px">
<div class="mb">File Edit View Selection Find Packages Help</div><div class="tb"><b></b></div>
<div class="hl" style="top:145px;height:8px;right:190px"></div>
<pre class="n">622
623
624
625
626
627
628
629
630
631
632
633
634
635
636
637
638
639
640
641
642
643
644
645</pre>
<pre class="c">        omega_Matrix[<span class="m">0</span>,<span class="m">2</span>]=<span class="m">1</span>
        omega_Matrix[<span class="m">0</span>,<span class="m">3</span>]=<span class="m">1</span>
        omega_Matrix[<span class="m">1</span>,<span class="m">0</span>]=<span class="m">0</span>
        omega_Matrix[<span class="m">1</span>,<span class="m">1</span>]=<span class="m">1</span>
        omega_Matrix[<span class="m">1</span>,<span class="m">2</span>]=<span class="m">0</span>
        omega_Matrix[<span class="m">1</span>,<span class="m">3</span>]=-<span class="m">1</span>
        omega_Matrix[<span class="m">2</span>,<span class="m">0</span>]=-<span class="m">1</span>
        omega_Matrix[<span class="m">2</span>,<span class="m">1</span>]=<span class="m">0</span>
        omega_Matrix[<span class="m">2</span>,<span class="m">2</span>]=<span class="m">1</span>
        omega_Matrix[<span class="m">2</span>,<span class="m">3</span>]=<span class="m">0</span>
        omega_Matrix[<span class="m">3</span>,<span class="m">0</span>]=-<span class="m">1</span>
        omega_Matrix[<span class="m">3</span>,<span class="m">1</span>]=<span class="m">1</span>
        omega_Matrix[<span class="m">3</span>,<span class="m">2</span>]=-<span class="m">1</span>
        omega_Matrix[<span class="m">3</span>,<span class="m">3</span>]=<span class="m">1</span>

        omega_Matrix_inverse = np.linalg.<span class="f">inv</span>(omega_Matrix)

        U1_max=ct*<span class="m">4</span>*omega_max**<span class="m">2</span>
        U1_min=ct*<span class="m">4</span>*omega_min**<span class="m">2</span>

        U2_max = ct*l*(omega_max**<span class="m">2</span>-omega_min**<span class="m">2</span>)
        U2_min = -U2_max

        U3_max = ct*l*(omega_max**<span class="m">2</span>-omega_min**<span class="m">2</span>)</pre>
<div class="sc"></div><div class="sb"><i style="left:4px;width:150px"></i><i style="left:340px;width:50px"></i></div>
</div>

<!-- code r3c2 -->
<div class="t code" style="left:801px;top:681px">
<div class="mb">File Edit View Selection Find Packages Help</div><div class="tb"><b></b></div>
<div class="hl" style="top:103px;height:8px;right:90px"></div>
<pre class="n">672
673
674
675
676
677
678
679
680
681
682
683
684
685
686
687
688
689
690
691
692
693
694</pre>
<pre class="c">        UC_vector[<span class="m">3</span>,<span class="m">0</span>]=U4C

        omegas_vector = omega_Matrix_inverse @ UC_vector

        omega1P2=omegas_vector[<span class="m">0</span>,<span class="m">0</span>]
        omega2P2=omegas_vector[<span class="m">1</span>,<span class="m">0</span>]
        omega3P2=omegas_vector[<span class="m">2</span>,<span class="m">0</span>]
        omega4P2=omegas_vector[<span class="m">3</span>,<span class="m">0</span>]


        <span class="k">if</span> omega1P2&lt;=<span class="m">0</span> <span class="k">or</span> omega2P2&lt;=<span class="m">0</span> <span class="k">or</span> omega3P2&lt;=<span class="m">0</span> <span class="k">or</span> omega4P2&lt;=<span class="m">0</span>:
            <span class="f">print</span>(<span class="s">"Solver failed to find a feasible solution. -> 3"</span>)
            solution_found = <span class="m">False</span>
            <span class="k">return</span> <span class="m">None, None, None, None</span>, solution_found
        <span class="k">else</span>:
            omega1=np.<span class="f">sqrt</span>(omega1P2)
            omega2=np.<span class="f">sqrt</span>(omega2P2)
            omega3=np.<span class="f">sqrt</span>(omega3P2)
            omega4=np.<span class="f">sqrt</span>(omega4P2)

            <span class="cm"># Compute the new total omega</span>
            omega_total=omega1-omega2+omega3-omega4
</pre>
<div class="sc"></div><div class="sb"><i style="left:4px;width:150px"></i><i style="left:340px;width:50px"></i></div>
</div>

<!-- code r3c3 -->
<div class="t code" style="left:1200px;top:681px">
<div class="mb">File Edit View Selection Find Packages Help</div><div class="tb"><b></b></div>
<div class="hl" style="top:136px;height:26px"></div>
<pre class="n">557
558
559
560
561
562
563
564
565
566
567
568
569
570
571
572
573
574
575
576
577
578
579
580</pre>
<pre class="c">        h = np.<span class="f">vstack</span>((y_max_global - CAX, -y_min_global + CAX, delta_y_global))
        ht = h.<span class="f">ravel</span>()

        <span class="k">try</span>:
            du=<span class="f">solve_qp</span>(Hdb,ft,G,ht,solver=<span class="s">"cvxopt"</span>)

            <span class="k">if</span> du <span class="k">is not</span> <span class="m">None</span>:
                <span class="cm"># Update the absolute inputs</span>
                U2=U2+du[<span class="m">0</span>]
                U3=U3+du[<span class="m">1</span>]
                U4=U4+du[<span class="m">2</span>]
            <span class="k">else</span>:
                <span class="f">print</span>(<span class="s">"Solver failed to find a feasible solution. -> 1"</span>)
                solution_found = <span class="m">False</span>
                <span class="k">return</span> <span class="m">None, None, None, None</span>, solution_found

        <span class="k">except</span> <span class="y">Exception</span> <span class="k">as</span> e:
            <span class="f">print</span>(<span class="s">"Solver failed to find a feasible solution. -> 2"</span>)
            <span class="f">print</span>(<span class="s">f"Error: {e}"</span>)
            solution_found = <span class="m">False</span>
            <span class="k">return</span> <span class="m">None, None, None, None</span>, solution_found

</pre>
<div class="sc"></div><div class="sb"><i style="left:4px;width:150px"></i><i style="left:340px;width:50px"></i></div>
</div>

</body></html>
